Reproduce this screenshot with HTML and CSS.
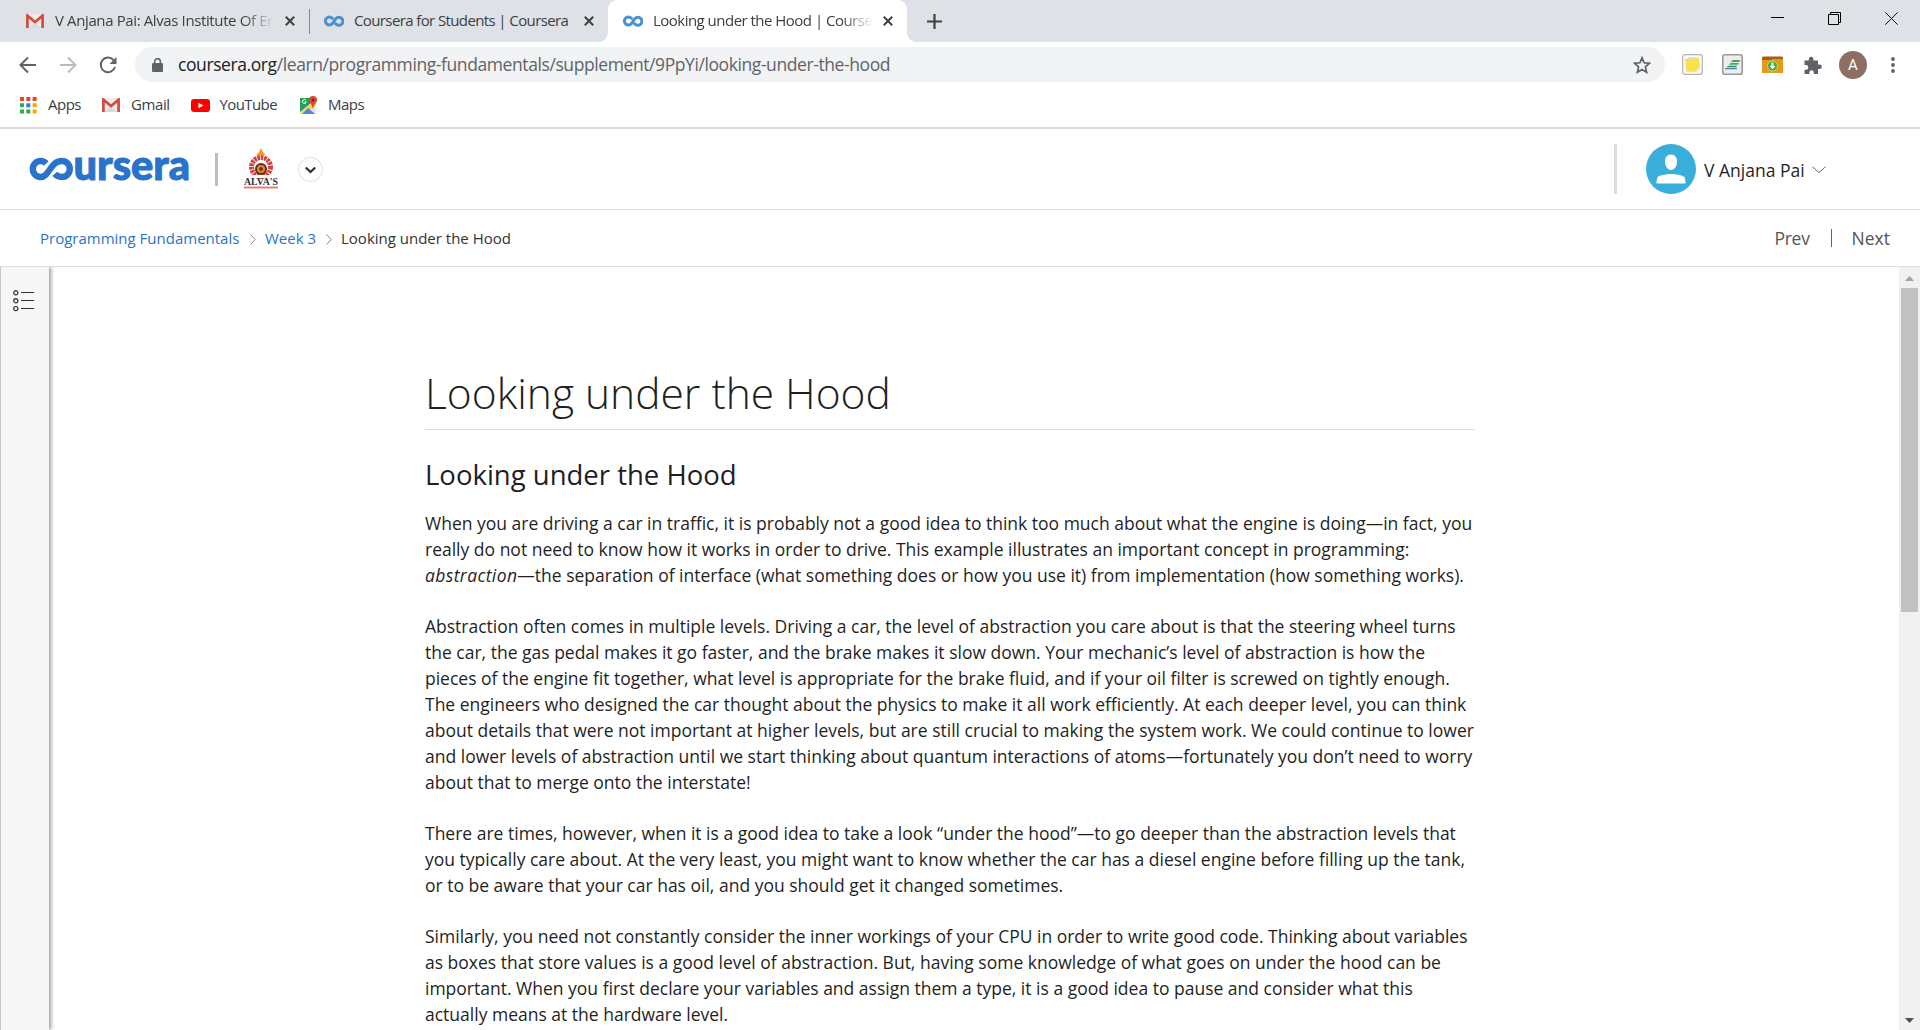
FILE: index.html
```html
<!DOCTYPE html>
<html lang="en">
<head>
<meta charset="utf-8">
<title>Looking under the Hood | Coursera</title>
<link rel="stylesheet" href="styles.css">
</head>
<body>
<svg class="defs" width="0" height="0">
  <symbol id="gmail" viewBox="0 0 18 14"><rect x="0" y="0" width="18" height="14" rx="1" fill="#ececec"/><path d="M3 14 9 8l6 6z" fill="#dadada"/><path d="M1.4 14V1.6L9 8l7.600-6.400V14" fill="none" stroke="#d54b3d" stroke-width="2.700"/></symbol>
  <symbol id="infinity" viewBox="0 0 20 12"><path d="M8.300 3.200A4 4 0 1 0 8.300 8.800L12 3.500A4 4 0 1 1 11.700 8.800" fill="none" stroke="#4a90d2" stroke-width="3" stroke-linecap="round"/></symbol>
  <symbol id="close" viewBox="0 0 10 10"><path d="M.8.8 9.200 9.200M9.200.8.8 9.200" stroke="#3c4043" stroke-width="2" fill="none"/></symbol>
  <symbol id="crumb" viewBox="0 0 6 11"><path d="m.6.5 4.600 5-4.600 5" stroke="#888" fill="none"/></symbol>
</svg>

<header class="browser">
  <div class="tabs">
    <div class="tab tab-mail">
      <svg class="mail-icon"><use href="#gmail"/></svg>
      <span class="tab-title fade t1">V Anjana Pai: Alvas Institute Of En</span>
      <svg class="close"><use href="#close"/></svg>
    </div>
    <div class="tab-divider"></div>
    <div class="tab tab-students">
      <svg class="inf-icon"><use href="#infinity"/></svg>
      <span class="tab-title t2">Coursera for Students | Coursera</span>
      <svg class="close"><use href="#close"/></svg>
    </div>
    <div class="tab tab-active">
      <svg class="inf-icon"><use href="#infinity"/></svg>
      <span class="tab-title fade t3">Looking under the Hood | Course</span>
      <svg class="close"><use href="#close"/></svg>
    </div>
    <svg class="new-tab" viewBox="0 0 15 15"><path d="M7.500 0v15M0 7.500h15" stroke="#3c4043" stroke-width="2.200"/></svg>
    <div class="window-buttons">
      <svg width="13" height="13"><path d="M0 5.500h13" stroke="#000"/></svg>
      <svg width="13" height="13"><path d="M.5 2.500h10v10H.5zM2.500 2.500v-2h10v10h-2" stroke="#000" fill="none"/></svg>
      <svg width="13" height="13"><path d="m.3.3 12.400 12.400M12.700.3.3 12.700" stroke="#111"/></svg>
    </div>
  </div>

  <div class="toolbar">
    <svg class="nav" viewBox="0 0 18 18"><path d="M17 9H2M9 1.500 1.500 9 9 16.500" stroke="#5f6368" stroke-width="2" fill="none"/></svg>
    <svg class="nav" viewBox="0 0 18 18"><path d="M1 9h15M9 1.500 16.500 9 9 16.500" stroke="#babcbe" stroke-width="2" fill="none"/></svg>
    <svg class="nav" viewBox="0 0 18 18"><path d="M14.500 4A7.300 7.300 0 1 0 16 11" stroke="#5f6368" stroke-width="2" fill="none"/><path d="M17.500 1v7h-7z" fill="#5f6368"/></svg>
    <div class="address">
      <svg class="lock" viewBox="0 0 11 14"><rect y="5" width="11" height="9" rx="1" fill="#5f6368"/><path d="M2.700 6V3.500a2.800 2.800 0 0 1 5.600 0V6" fill="none" stroke="#5f6368" stroke-width="1.500"/></svg>
      <span class="url"><b>coursera.org</b>/learn/programming-fundamentals/supplement/9PpYi/looking-under-the-hood</span>
      <svg class="star" viewBox="0 0 18 18"><path d="m9 1.800 2.100 5 5.400.5-4.100 3.600 1.200 5.300L9 13.400l-4.600 2.800 1.200-5.300L1.500 7.300l5.400-.5z" fill="none" stroke="#5f6368" stroke-width="1.700"/></svg>
    </div>
    <div class="extensions">
      <svg width="21" height="21" viewBox="0 0 21 21"><rect x=".7" y=".7" width="19.600" height="19.600" rx="2" fill="#fafafa" stroke="#b4b4b4" stroke-width="1.200"/><path d="M3 5 17 3.500l1 11-3.500 3.500L4.500 17.500z" fill="#fbe04d"/><path d="M14.500 18l.3-3.200 3.200-.3z" fill="#fff3a8"/><path d="M6 3.200h7v2H6z" fill="#e5dcae"/></svg>
      <svg width="21" height="21" viewBox="0 0 21 21"><rect x=".8" y=".8" width="19.400" height="19.400" rx="2" fill="#eee" stroke="#999" stroke-width="1.600"/><path d="M11 6h7l-.5 2H8.500zM8.500 9h8.500L16 10.800H7z" fill="#3dab51"/><path d="M6 11.800h9L14 13.200H4.500z" fill="#258d70"/><path d="M3 14.200h12v1H3z" fill="#2267a9"/></svg>
      <svg width="21" height="18" viewBox="0 0 21 18"><path d="M0 2q0-1.500 1.500-1.500h18Q21 .5 21 2v5H0z" fill="#a45d1d"/><path d="M0 4h9l2-1h10v14H0z" fill="#e59a1e"/><circle cx="10.500" cy="10" r="5" fill="#42ae32" stroke="#b7df72"/><path d="M9.400 6.500h2.200V10h1.900l-3 3.200-3-3.200h1.900z" fill="#fff"/></svg>
      <svg width="18" height="18" viewBox="0 0 18 18"><path d="M.5 4.500h4.300V3a2.300 2.300 0 0 1 4.600 0v1.500H14v4h1.500a2.300 2.300 0 0 1 0 4.600H14v4.900H9.800v-1.500a2.200 2.200 0 0 0-4.400 0V18H.5v-4.300H2a2.300 2.300 0 0 0 0-4.600H.5z" fill="#5f6368"/></svg>
      <span class="account">A</span>
      <svg width="4" height="16" viewBox="0 0 4 16"><g fill="#5f6368"><circle cx="2" cy="2" r="1.900"/><circle cx="2" cy="8" r="1.900"/><circle cx="2" cy="14" r="1.900"/></g></svg>
    </div>
  </div>

  <nav class="bookmarks">
    <a class="bm-apps"><svg width="17" height="17" viewBox="0 0 17 17"><path d="M0 0h4v4H0zM6.300 0h4v4h-4zM12.600 0h4v4h-4z" fill="#ea4335"/><path d="M0 6.300h4v4H0zM0 12.600h4v4H0zM6.300 12.600h4v4h-4z" fill="#34a853"/><path d="M6.300 6.300h4v4h-4z" fill="#1a82e8"/><path d="M12.600 6.300h4v4h-4zM12.600 12.600h4v4h-4z" fill="#f9ab00"/></svg><span>Apps</span></a>
    <a class="bm-gmail"><svg class="mail-icon"><use href="#gmail"/></svg><span>Gmail</span></a>
    <a class="bm-youtube"><svg width="19" height="13" viewBox="0 0 19 13"><rect width="19" height="13" rx="3" fill="#f00"/><path d="m7.500 3.800 5 2.700-5 2.700z" fill="#fff"/></svg><span>YouTube</span></a>
    <a class="bm-maps"><svg width="19" height="18" viewBox="0 0 19 18"><path d="M1 2h12l4 5v11H1z" fill="#e6e6e6"/><path d="M1 2h11v5L1 16z" fill="#23a159"/><path d="M1 17 14 6l2.500 3.500L9 16z" fill="#fdd04a"/><path d="M3 18 9 12l7 6z" fill="#4a86e8"/><path d="M14 0a4 4 0 0 1 4 4c0 3-3.300 4-4 9.500C13.300 8 10 7 10 4a4 4 0 0 1 4-4" fill="#df4537"/><circle cx="14" cy="4" r="1.500" fill="#7e211a"/><path d="M7 4.300A2 2 0 1 0 7.300 6H5.500" fill="none" stroke="#fff" stroke-width="1"/></svg><span>Maps</span></a>
  </nav>
</header>

<header class="site-header">
  <svg class="logo" viewBox="0 0 160 24" role="img" aria-label="Coursera">
    <path d="M16.200 6.500C14.500 4.600 12.500 4 10.800 4A7.900 7.900 0 1 0 10.800 20C19 20 20.500 4 31.800 4A8 8 0 1 1 31.800 20C28.500 20 26.200 18.500 24.800 16.800" fill="none" stroke="#2a73cc" stroke-width="6.400"/>
    <text x="43.500" y="22.500" textLength="116.500" lengthAdjust="spacingAndGlyphs">ursera</text>
  </svg>
  <div class="logo-divider"></div>
  <svg class="alvas" viewBox="0 0 36 42">
    <path d="M18 0q1 4 5 7H13q4-3 5-7" fill="#f39a32"/>
    <circle cx="18" cy="19" r="9.500" fill="none" stroke="#cf4342" stroke-width="5" stroke-dasharray="2.600 .8" stroke-linecap="butt"/>
    <path d="M9 27h18l1 3H8z" fill="#fff"/>
    <circle cx="18" cy="21" r="6" fill="#612b22"/><circle cx="18" cy="21" r="4" fill="#e98b2b"/><circle cx="18" cy="21" r="2" fill="#70391f"/>
    <text x="1" y="37" textLength="34" lengthAdjust="spacingAndGlyphs">ALVA'S</text>
    <path d="M1 39.500h34" stroke="#e87c7a" stroke-width="2"/>
  </svg>
  <svg class="switcher" viewBox="0 0 25 25"><circle cx="12.500" cy="12.500" r="12" fill="#fff" stroke="#ddd"/><path d="m7.800 10.500 4.700 4.500 4.700-4.500" stroke="#28303a" stroke-width="2.200" fill="none"/></svg>
  <div class="user">
    <svg class="avatar" viewBox="0 0 50 50"><circle cx="25" cy="25" r="25" fill="#3aaedb"/><path d="M25 10.500c4 0 6 3 6 7 0 4.500-2.500 8.500-6 8.500s-6-4-6-8.500c0-4 2-7 6-7M10.500 39.500q0-5 1.500-7 5-2.500 13-2.500t13 2.500q1.500 2 1.500 7z" fill="#fff"/></svg>
    <span class="user-name">V Anjana Pai</span>
    <svg class="user-chevron" viewBox="0 0 14 8"><path d="m.5.700 6.500 6 6.500-6" fill="none" stroke="#666"/></svg>
  </div>
</header>

<nav class="crumbs">
  <a class="c1">Programming Fundamentals</a>
  <svg class="crumb-icon"><use href="#crumb"/></svg>
  <a class="c2">Week 3</a>
  <svg class="crumb-icon"><use href="#crumb"/></svg>
  <span class="c3">Looking under the Hood</span>
  <div class="pager"><span class="prev">Prev</span><i></i><span>Next</span></div>
</nav>

<div class="workspace">
  <aside class="rail">
    <svg width="22" height="22" viewBox="0 0 22 22" fill="none" stroke="#333"><g stroke-width="1.200"><circle cx="2.800" cy="2.800" r="2.100"/><circle cx="2.800" cy="10.700" r="2.100"/><circle cx="2.800" cy="18.600" r="2.100"/></g><path d="M8 2.500h13M8 10.500h13M8 18.500h13"/></svg>
  </aside>
  <main class="article">
    <h1>Looking under the Hood</h1>
    <h2>Looking under the Hood</h2>
    <p>When you are driving a car in traffic, it is probably not a good idea to think too much about what the engine is doing—in fact, you<br>really do not need to know how it works in order to drive. This example illustrates an important concept in programming:<br><em>abstraction</em>—the separation of interface (what something does or how you use it) from implementation (how something works).</p>
    <p>Abstraction often comes in multiple levels. Driving a car, the level of abstraction you care about is that the steering wheel turns<br>the car, the gas pedal makes it go faster, and the brake makes it slow down. Your mechanic’s level of abstraction is how the<br>pieces of the engine fit together, what level is appropriate for the brake fluid, and if your oil filter is screwed on tightly enough.<br>The engineers who designed the car thought about the physics to make it all work efficiently. At each deeper level, you can think<br>about details that were not important at higher levels, but are still crucial to making the system work. We could continue to lower<br>and lower levels of abstraction until we start thinking about quantum interactions of atoms—fortunately you don’t need to worry<br>about that to merge onto the interstate!</p>
    <p>There are times, however, when it is a good idea to take a look “under the hood”—to go deeper than the abstraction levels that<br>you typically care about. At the very least, you might want to know whether the car has a diesel engine before filling up the tank,<br>or to be aware that your car has oil, and you should get it changed sometimes.</p>
    <p>Similarly, you need not constantly consider the inner workings of your CPU in order to write good code. Thinking about variables<br>as boxes that store values is a good level of abstraction. But, having some knowledge of what goes on under the hood can be<br>important. When you first declare your variables and assign them a type, it is a good idea to pause and consider what this<br>actually means at the hardware level.</p>
  </main>
  <div class="scrollbar">
    <svg width="9" height="5"><path d="M4.500 0 9 5H0z" fill="#a3a3a3"/></svg>
    <div class="thumb"></div>
    <svg class="down" width="9" height="5"><path d="M0 0h9L4.500 5z" fill="#505050"/></svg>
  </div>
</div>
</body>
</html>
```
FILE: styles.css
```css
* { box-sizing: border-box; }
body { margin: 0; width: 1920px; height: 1030px; overflow: hidden; display: flex; flex-direction: column; background: #fff; font-family: "Open Sans", sans-serif; color: #1f1f1f; white-space: nowrap; }
svg { display: block; flex: none; }
.defs { position: absolute; }

.browser { height: 129px; flex: none; border-bottom: 2px solid #dadce0; color: #3c4043; font-size: 15px; }
.tabs { height: 42px; background: #dee1e6; display: flex; align-items: center; }
.tab { display: flex; align-items: center; height: 42px; }
.tab-mail { width: 309px; padding-left: 26px; }
.tab-students { width: 298px; padding-left: 14px; }
.tab-active { position: relative; width: 299px; padding-left: 15px; background: #fff; border-radius: 9px 9px 0 0; }
.tab-active::before, .tab-active::after { content: ""; position: absolute; bottom: 0; width: 9px; height: 9px; }
.tab-active::before { left: -9px; background: radial-gradient(circle at 0 0, #dee1e6 8.500px, #fff 9px); }
.tab-active::after { right: -9px; background: radial-gradient(circle at 100% 0, #dee1e6 8.500px, #fff 9px); }
.tab-divider { width: 1px; height: 25px; background: #84878b; }
.tab-title { line-height: 22px; padding-bottom: 2px; }
.t1 { margin-left: 11px; width: 219px; letter-spacing: -.38px; }
.t2 { margin-left: 10px; width: 219px; letter-spacing: -.61px; }
.t3 { margin-left: 10px; width: 220px; letter-spacing: -.52px; }
.fade { -webkit-mask-image: linear-gradient(to right, #000 86%, transparent); mask-image: linear-gradient(to right, #000 86%, transparent); }
.mail-icon { width: 18px; height: 14px; }
.inf-icon { width: 20px; height: 12px; }
.close { width: 10px; height: 10px; margin-left: 11px; }
.tab-active .close { margin-left: 10px; }
.new-tab { width: 15px; height: 15px; margin-left: 20px; }
.window-buttons { margin-left: auto; margin-right: 22px; display: flex; gap: 44px; padding-bottom: 5px; }

.toolbar { height: 45px; display: flex; align-items: center; padding-left: 19px; }
.nav { width: 18px; height: 18px; margin-right: 22px; }
.address { width: 1530px; height: 35px; margin-left: -4px; border-radius: 18px; background: #f1f3f4; display: flex; align-items: center; padding: 0 14px 0 17px; }
.lock { width: 11px; height: 14px; }
.url { margin-left: 15px; padding-bottom: 1px; font-size: 17.500px; letter-spacing: -.41px; color: #5f6368; }
.url b { font-weight: 400; color: #202124; }
.star { width: 18px; height: 18px; margin-left: auto; }
.extensions { display: flex; align-items: center; margin-left: 17px; }
.extensions > * { margin-right: 19px; }
.extensions > :nth-child(3) { margin-right: 21px; }
.extensions > :nth-child(4) { margin-right: 17px; }
.account { width: 28px; height: 28px; border-radius: 50%; background: #8d6e63; color: #fff; font: 15px/29px Roboto, sans-serif; text-align: center; }
.extensions > .account { margin-right: 24px; }

.bookmarks { display: flex; align-items: center; height: 36px; padding-left: 20px; font-size: 15px; }
.bookmarks a { display: flex; align-items: center; }
.bookmarks span { padding-bottom: 2px; }
.bm-apps { width: 82px; gap: 11px; letter-spacing: -.5px; }
.bm-gmail { width: 88.500px; gap: 11px; letter-spacing: -.4px; }
.bm-youtube { width: 108.500px; gap: 10px; letter-spacing: -.6px; }
.bm-maps { gap: 10px; letter-spacing: -.5px; }

.site-header { height: 81px; flex: none; border-bottom: 1px solid #ddd; display: flex; align-items: center; padding-left: 29.500px; }
.logo { width: 160px; height: 24px; overflow: visible; }
.logo text { font: 900 41px Lato, sans-serif; fill: #2a73cc; stroke: #2a73cc; stroke-width: 1px; }
.logo-divider { width: 3px; height: 33px; margin-left: 25.500px; background: #bdbdbd; }
.alvas { width: 36px; height: 42px; margin-left: 25px; }
.alvas text { font: bold 9.500px "Liberation Serif", serif; fill: #333; }
.switcher { width: 25px; height: 25px; margin-left: 19px; }
.user { height: 50px; margin-left: auto; margin-right: 94px; border-left: 3px solid #ddd; padding-left: 29px; display: flex; align-items: center; }
.avatar { width: 50px; height: 50px; }
.user-name { width: 100px; margin-left: 8px; padding-top: 2px; font-size: 17.500px; }
.user-chevron { width: 14px; height: 8px; margin-left: 8px; margin-top: 2px; }

.crumbs { height: 57px; flex: none; border-bottom: 1px solid #ddd; display: flex; align-items: center; padding-left: 40px; font-size: 15px; }
.crumbs a { color: #2a73cc; }
.c1 { width: 210px; }
.c2 { width: 51px; margin-left: 9px; }
.c2 + .crumb-icon { margin-left: 10px; }
.c3 { margin-left: 9px; color: #333; }
.crumb-icon { width: 6px; height: 11px; margin-top: 3px; }
.pager { display: flex; align-items: center; margin-left: auto; margin-right: 30px; font-size: 17.500px; color: #555; }
.prev { letter-spacing: -.3px; }
.pager i { width: 1px; height: 18px; background: #666; margin: 0 20px 0 21px; }

.workspace { flex: 1; min-height: 0; display: flex; }
.rail { width: 49px; flex: none; border-left: 1px solid #c8c8c8; background: #f7f7f7; box-shadow: 2px 0 4px rgba(0, 0, 0, .4); padding: 23px 0 0 12px; clip-path: inset(0 -8px 0 0); }
.article { flex: 1; padding: 97px 0 0 376px; }
h1 { width: 1050px; height: 66px; margin: 0; border-bottom: 1px solid #ddd; font-size: 42.500px; font-weight: 300; line-height: 58px; }
h2 { margin: 25px 0 15px; font-size: 27.500px; font-weight: 400; line-height: 40px; }
p { margin: 0 0 25px; font-size: 17.500px; line-height: 26px; }
em { letter-spacing: .38px; }
.scrollbar { width: 21px; flex: none; background: #f1f1f1; display: flex; flex-direction: column; align-items: center; padding: 9px 0 7px; }
.thumb { width: 17px; height: 324px; margin-top: 7px; background: #c1c1c1; }
.down { margin-top: auto; }
```
